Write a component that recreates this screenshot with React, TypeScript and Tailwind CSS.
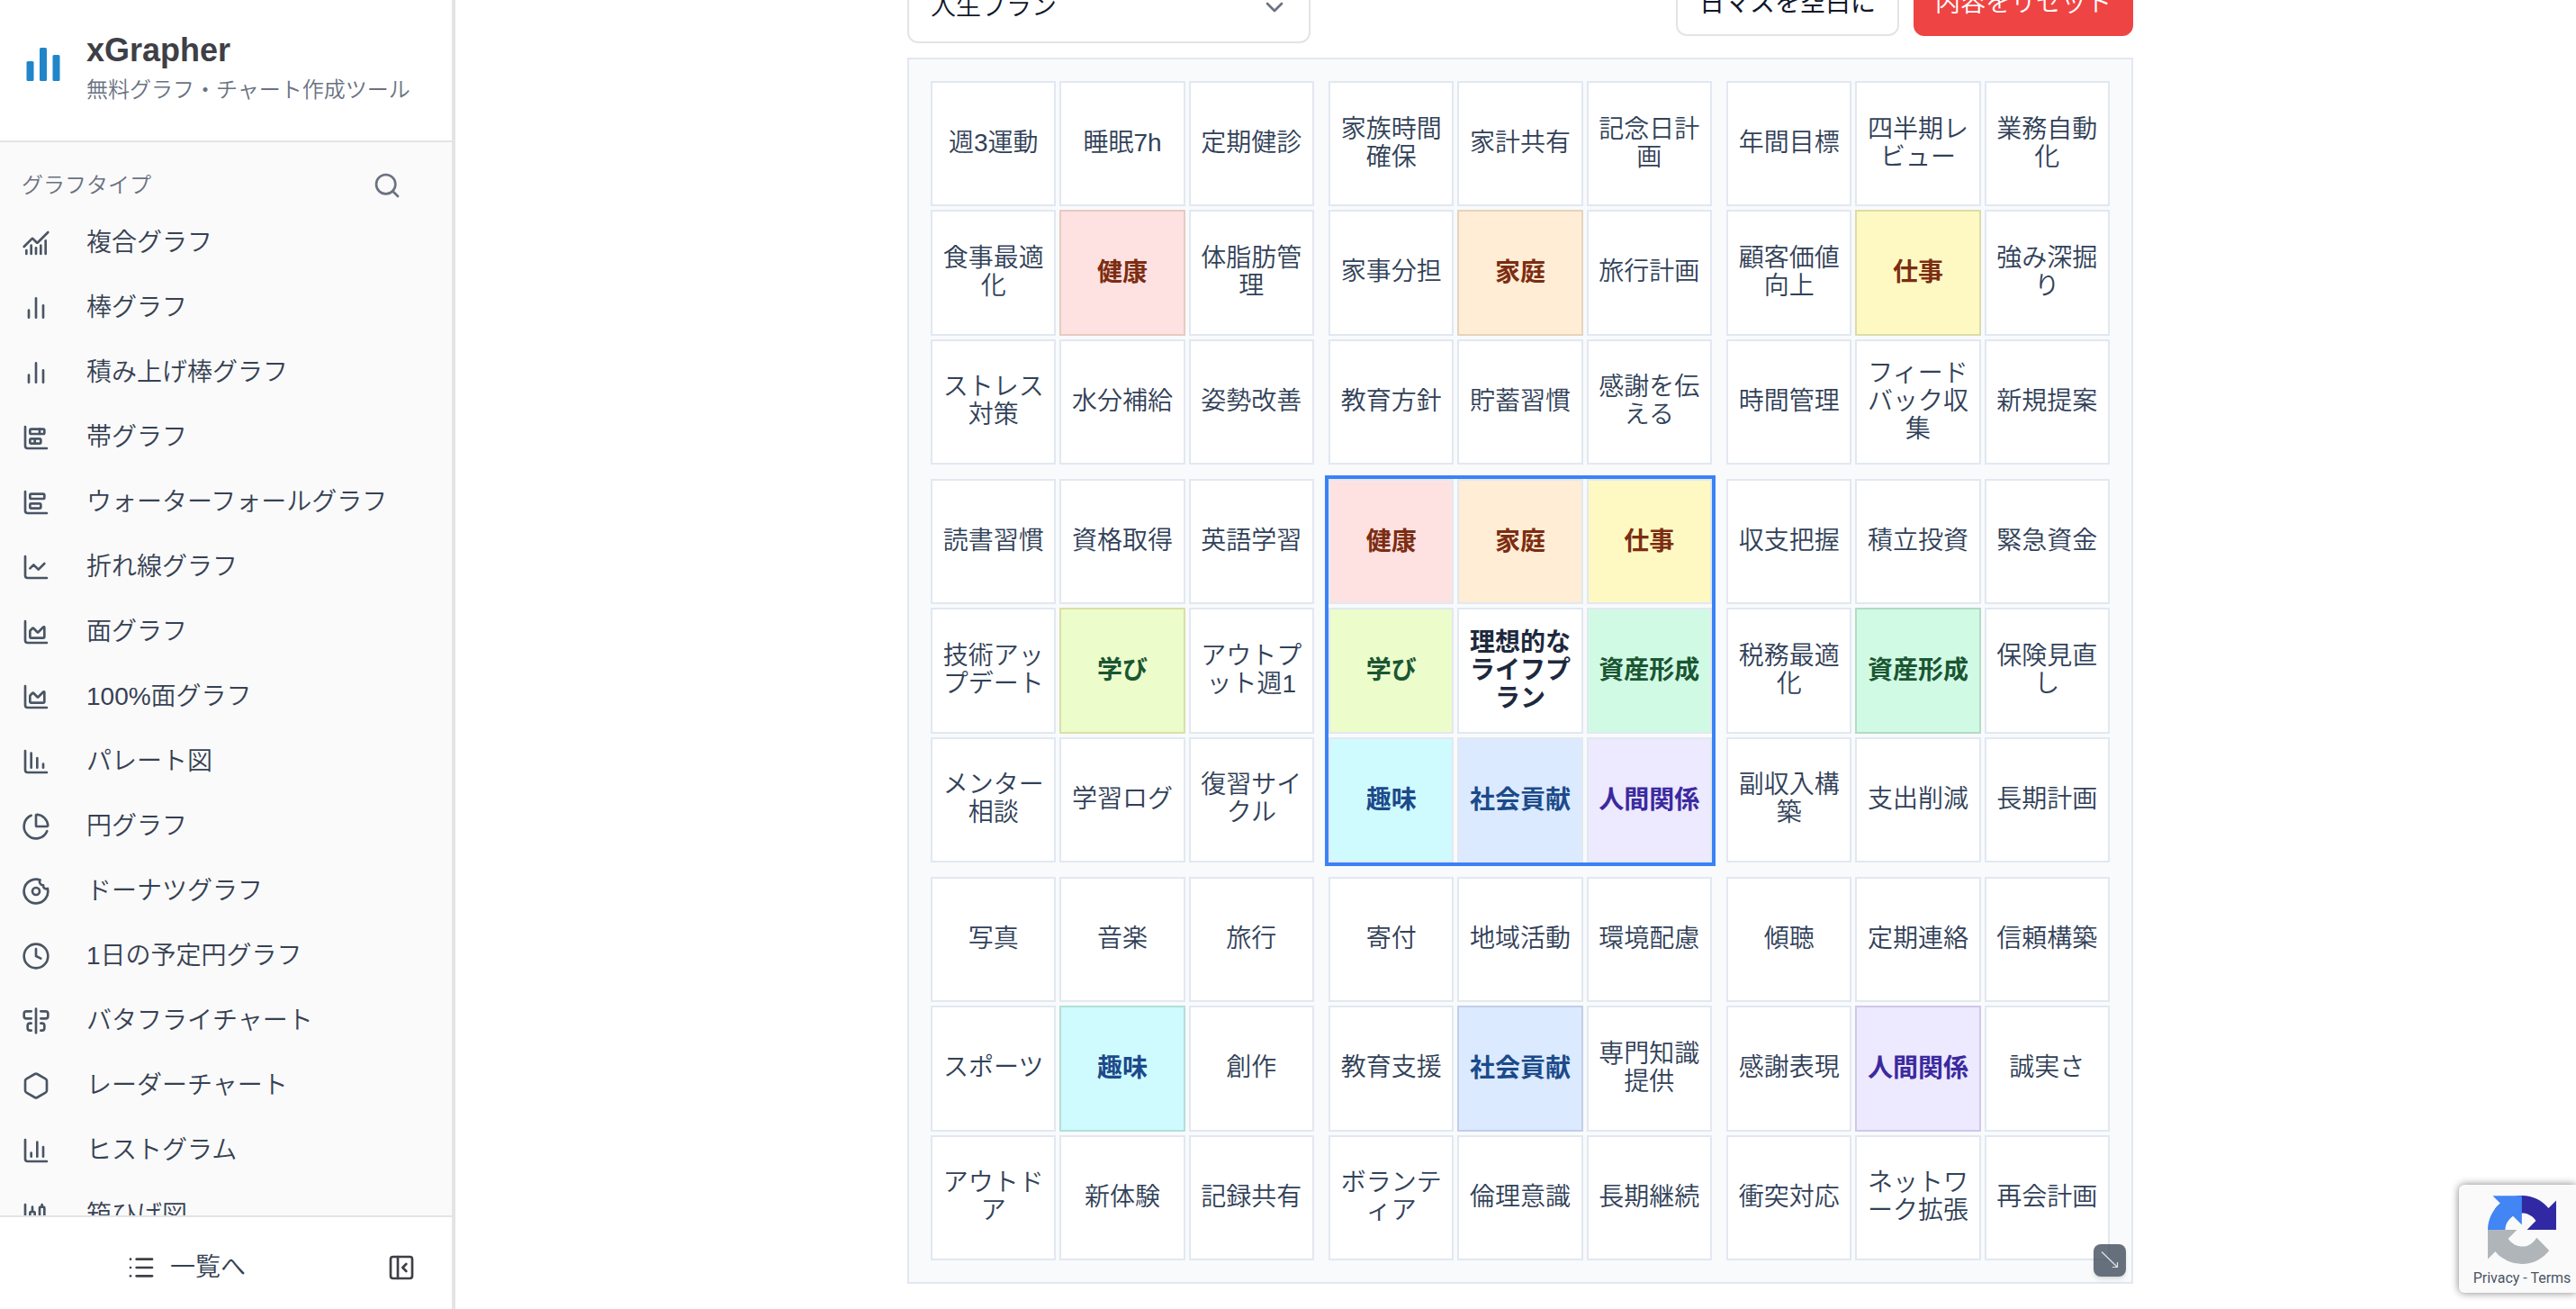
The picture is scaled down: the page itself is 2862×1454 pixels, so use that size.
import type { ReactNode } from "react";
import {
  AlignCenterVertical,
  ChartArea,
  ChartBarBig,
  ChartBarStacked,
  ChartCandlestick,
  ChartColumn,
  ChartColumnDecreasing,
  ChartLine,
  ChartNoAxesCombined,
  ChartPie,
  ChevronDown,
  Clock,
  Donut,
  Hexagon,
  List,
  PanelLeftClose,
  Search,
} from "lucide-react";

function BarsIcon() {
  return (
    <svg
      viewBox="0 0 24 24"
      className="size-8"
      fill="none"
      stroke="currentColor"
      strokeWidth="2"
      strokeLinecap="round"
      aria-hidden="true"
    >
      <path d="M18 20V10M12 20V4M6 20v-6" />
    </svg>
  );
}

function Logo() {
  return (
    <svg viewBox="0 0 40 40" className="size-10 shrink-0 text-[#2185c9]" fill="currentColor" aria-hidden="true">
      <rect x="1.5" y="16" width="8" height="22" rx="1.5" />
      <rect x="16" y="1" width="8" height="37" rx="1.5" />
      <rect x="30.5" y="9" width="8" height="29" rx="1.5" />
    </svg>
  );
}

const menu: { label: string; icon: ReactNode }[] = [
  { label: "複合グラフ", icon: <ChartNoAxesCombined className="size-8" /> },
  { label: "棒グラフ", icon: <BarsIcon /> },
  { label: "積み上げ棒グラフ", icon: <BarsIcon /> },
  { label: "帯グラフ", icon: <ChartBarStacked className="size-8" /> },
  { label: "ウォーターフォールグラフ", icon: <ChartBarBig className="size-8" /> },
  { label: "折れ線グラフ", icon: <ChartLine className="size-8" /> },
  { label: "面グラフ", icon: <ChartArea className="size-8" /> },
  { label: "100%面グラフ", icon: <ChartArea className="size-8" /> },
  { label: "パレート図", icon: <ChartColumnDecreasing className="size-8" /> },
  { label: "円グラフ", icon: <ChartPie className="size-8" /> },
  { label: "ドーナツグラフ", icon: <Donut className="size-8" /> },
  { label: "1日の予定円グラフ", icon: <Clock className="size-8" /> },
  { label: "バタフライチャート", icon: <AlignCenterVertical className="size-8" /> },
  { label: "レーダーチャート", icon: <Hexagon className="size-8" /> },
  { label: "ヒストグラム", icon: <ChartColumn className="size-8" /> },
  { label: "箱ひげ図", icon: <ChartCandlestick className="size-8" /> },
];

function Sidebar() {
  return (
    <aside className="flex w-[506px] shrink-0 flex-col border-r-4 border-[#e4e4e7] bg-[#fafafa]">
      <header className="flex h-[158px] shrink-0 items-start gap-7 border-b-2 border-[#e4e4e7] bg-white px-7 pt-[34px]">
        <div className="flex h-19 items-center">
          <Logo />
        </div>
        <div className="flex flex-col gap-1.5 whitespace-nowrap">
          <h1 className="text-[36px] leading-[44px] font-bold text-[#3f3f46]">xGrapher</h1>
          <p className="text-2xl leading-8 text-gray-500">無料グラフ・チャート作成ツール</p>
        </div>
      </header>
      <nav className="min-h-0 flex-1 overflow-hidden pt-5" aria-label="グラフタイプ">
        <div className="flex h-14 items-center justify-between pr-14 pl-6">
          <h2 className="text-2xl leading-8 text-gray-500">グラフタイプ</h2>
          <button type="button" aria-label="検索" className="text-gray-500">
            <Search className="size-8" />
          </button>
        </div>
        <ul>
          {menu.map((item) => (
            <li key={item.label}>
              <a href="#" className="flex h-[72px] items-center gap-10 px-6 text-[28px] leading-10 text-gray-700">
                <span className="text-gray-600">{item.icon}</span>
                <span className="whitespace-nowrap">{item.label}</span>
              </a>
            </li>
          ))}
        </ul>
      </nav>
      <footer className="flex h-[104px] shrink-0 items-center gap-2 border-t-2 border-[#e4e4e7] bg-white pt-2.5 pr-8 text-[#3f3f46]">
        <a href="#" className="flex flex-1 items-center justify-center gap-4 text-[28px] leading-10 text-gray-700">
          <List className="size-8 text-[#3f3f46]" />
          一覧へ
        </a>
        <button type="button" aria-label="サイドバーを閉じる" className="flex size-12 items-center justify-center">
          <PanelLeftClose className="size-8" />
        </button>
      </footer>
    </aside>
  );
}

type Tone = "red" | "orange" | "yellow" | "lime" | "green" | "cyan" | "blue" | "violet";

const fills: Record<Tone, string> = {
  red: "bg-[#fee2e2] text-[#7c2d12]",
  orange: "bg-[#ffedd5] text-[#7c2d12]",
  yellow: "bg-[#fef9c3] text-[#7c2d12]",
  lime: "bg-[#ecfccb] text-[#1a5632]",
  green: "bg-[#d1fae5] text-[#1a5632]",
  cyan: "bg-[#cffafe] text-[#1c4a8a]",
  blue: "bg-[#dbeafe] text-[#1c4a8a]",
  violet: "bg-[#ede9fe] text-[#3b2a9e]",
};

const edges: Record<Tone, string> = {
  red: "border-[#e5cbc0]",
  orange: "border-[#e5d3bd]",
  yellow: "border-[#dcdca8]",
  lime: "border-[#dbdfa8]",
  green: "border-[#b0dcc6]",
  cyan: "border-[#b0e0d8]",
  blue: "border-[#c2cee8]",
  violet: "border-[#cfc8ea]",
};

type Theme = { name: string; tone: Tone; items: string[] };

const themes: Theme[] = [
  {
    name: "健康",
    tone: "red",
    items: ["週3運動", "睡眠7h", "定期健診", "食事最適化", "体脂肪管理", "ストレス対策", "水分補給", "姿勢改善"],
  },
  {
    name: "家庭",
    tone: "orange",
    items: ["家族時間確保", "家計共有", "記念日計画", "家事分担", "旅行計画", "教育方針", "貯蓄習慣", "感謝を伝える"],
  },
  {
    name: "仕事",
    tone: "yellow",
    items: ["年間目標", "四半期レビュー", "業務自動化", "顧客価値向上", "強み深掘り", "時間管理", "フィードバック収集", "新規提案"],
  },
  {
    name: "学び",
    tone: "lime",
    items: ["読書習慣", "資格取得", "英語学習", "技術アップデート", "アウトプット週1", "メンター相談", "学習ログ", "復習サイクル"],
  },
  {
    name: "資産形成",
    tone: "green",
    items: ["収支把握", "積立投資", "緊急資金", "税務最適化", "保険見直し", "副収入構築", "支出削減", "長期計画"],
  },
  {
    name: "趣味",
    tone: "cyan",
    items: ["写真", "音楽", "旅行", "スポーツ", "創作", "アウトドア", "新体験", "記録共有"],
  },
  {
    name: "社会貢献",
    tone: "blue",
    items: ["寄付", "地域活動", "環境配慮", "教育支援", "専門知識提供", "ボランティア", "倫理意識", "長期継続"],
  },
  {
    name: "人間関係",
    tone: "violet",
    items: ["傾聴", "定期連絡", "信頼構築", "感謝表現", "誠実さ", "衝突対応", "ネットワーク拡張", "再会計画"],
  },
];

function Cell({ className, children }: { className: string; children: ReactNode }) {
  return (
    <div
      className={`flex min-h-0 min-w-0 items-center justify-center border-2 px-2 text-center text-[28px] leading-[31px] break-all ${className}`}
    >
      {children}
    </div>
  );
}

function ThemeBlock({ theme }: { theme: Theme }) {
  const plain = (text: string) => (
    <Cell key={text} className="border-slate-200 bg-white pb-0.5 text-slate-700">
      {text}
    </Cell>
  );
  return (
    <section className="grid grid-cols-3 grid-rows-3 gap-1" aria-label={theme.name}>
      {theme.items.slice(0, 4).map(plain)}
      <Cell className={`font-bold ${fills[theme.tone]} ${edges[theme.tone]}`}>{theme.name}</Cell>
      {theme.items.slice(4).map(plain)}
    </section>
  );
}

function CenterBlock() {
  const themed = (theme: Theme) => (
    <Cell key={theme.name} className={`border-slate-200 font-bold ${fills[theme.tone]}`}>
      {theme.name}
    </Cell>
  );
  return (
    <section className="grid grid-cols-3 grid-rows-3 gap-1 ring-4 ring-[#3b82f6]" aria-label="理想的なライフプラン">
      {themes.slice(0, 4).map(themed)}
      <Cell className="border-slate-200 bg-white font-bold text-slate-800">理想的なライフプラン</Cell>
      {themes.slice(4).map(themed)}
    </section>
  );
}

function Toolbar() {
  return (
    <div className="-mt-8 flex items-start justify-between">
      <div className="relative w-[448px]">
        <select
          aria-label="テンプレート"
          className="h-20 w-full appearance-none rounded-xl border-2 border-[#e4e4e7] bg-white px-6 text-[28px] text-slate-900"
        >
          <option>人生プラン</option>
        </select>
        <ChevronDown className="pointer-events-none absolute top-6 right-6 size-8 text-gray-500" />
      </div>
      <div className="flex gap-4 text-[28px] leading-10">
        <button
          type="button"
          className="h-[72px] rounded-xl border-2 border-[#e4e4e7] bg-white px-6 font-normal text-slate-900"
        >
          日マスを空白に
        </button>
        <button type="button" className="h-[72px] rounded-xl bg-[#ef4444] px-6 text-white">
          内容をリセット
        </button>
      </div>
    </div>
  );
}

function Board() {
  return (
    <div className="relative mt-4 aspect-square w-full border-2 border-slate-200 bg-slate-50 p-6">
      <div className="grid h-full grid-cols-3 grid-rows-3 gap-4">
        {themes.slice(0, 4).map((t) => (
          <ThemeBlock key={t.name} theme={t} />
        ))}
        <CenterBlock />
        {themes.slice(4).map((t) => (
          <ThemeBlock key={t.name} theme={t} />
        ))}
      </div>
      <button
        type="button"
        aria-label="サイズ変更"
        className="absolute right-1.5 bottom-1.5 flex size-9 items-center justify-center rounded-lg bg-gray-700/75 text-white/80 shadow-md"
      >
        <svg viewBox="0 0 36 36" className="size-9" fill="none" stroke="currentColor" strokeWidth="1.2" aria-hidden="true">
          <path d="M9 8.500 26.500 25.500M21 25.500h5.500V20" />
        </svg>
      </button>
    </div>
  );
}

function RecaptchaBadge() {
  return (
    <div className="absolute right-0 bottom-[18px] flex h-[120px] w-[130px] flex-col items-center rounded-l-md bg-[#fafafa] pt-3 pl-2.5 shadow-[0_0_10px_#808080]">
      <svg viewBox="0 0 64 64" className="size-[76px] shrink-0" aria-label="reCAPTCHA">
        <path
          fill="#3029a3"
          d="M64 31.955l-.033-1.370V4.687l-7.160 7.160C50.948 4.674 42.033.093 32.050.093c-10.400 0-19.622 4.960-25.458 12.640l11.736 11.860a15.550 15.550 0 0 1 4.754-5.334c2.050-1.600 4.952-2.906 8.968-2.906.485 0 .860.057 1.135.163 4.976.393 9.288 3.140 11.828 7.124l-8.307 8.307L64 31.953"
        />
        <path
          fill="#4285f4"
          d="M31.862.094l-1.370.033H4.594l7.160 7.160C4.580 13.147 0 22.060 0 32.046c0 10.400 4.960 19.622 12.640 25.458L24.500 45.768a15.550 15.550 0 0 1-5.334-4.754c-1.600-2.050-2.906-4.952-2.906-8.968 0-.485.057-.860.163-1.135.393-4.976 3.140-9.288 7.124-11.828l8.307 8.307L31.860.095"
        />
        <path
          fill="#b0b5b9"
          d="M.001 32.045l.033 1.370v25.898l7.160-7.160c5.860 7.173 14.774 11.754 24.760 11.754 10.400 0 19.622-4.960 25.458-12.640l-11.736-11.860a15.550 15.550 0 0 1-4.754 5.334c-2.050 1.600-4.952 2.906-8.968 2.906-.485 0-.860-.057-1.135-.163-4.976-.393-9.288-3.140-11.828-7.124l8.307-8.307c-10.522.040-22.400.066-27.295-.005"
        />
      </svg>
      <p className="mt-1 font-['Roboto',sans-serif] text-base leading-6 font-normal whitespace-nowrap text-gray-600">
        <a href="#">Privacy</a> - <a href="#">Terms</a>
      </p>
    </div>
  );
}

export default function App() {
  return (
    <div className="relative flex h-screen overflow-hidden bg-white font-['Liberation_Sans','Noto_Sans_CJK_JP',sans-serif] font-[350]">
      <Sidebar />
      <main className="flex min-w-0 flex-1 justify-center overflow-hidden pl-2.5">
        <div className="w-full max-w-[1362px]">
          <Toolbar />
          <Board />
        </div>
      </main>
      <RecaptchaBadge />
    </div>
  );
}
